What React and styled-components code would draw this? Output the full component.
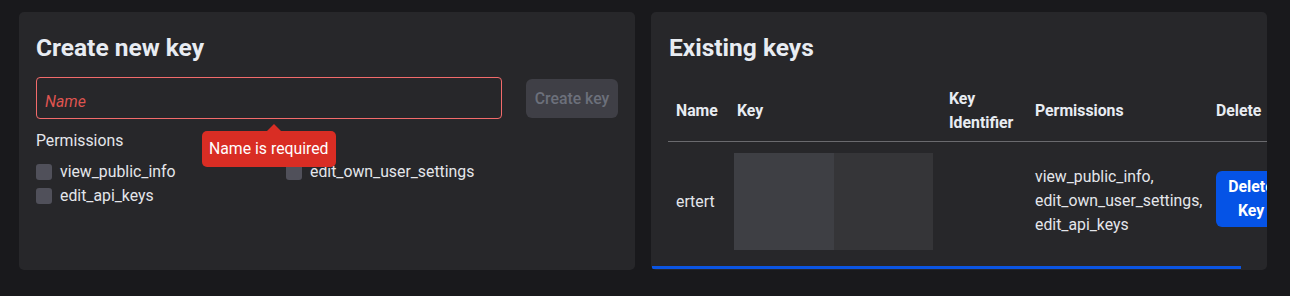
import React from "react";
import styled, { createGlobalStyle } from "styled-components";

const GlobalStyle = createGlobalStyle`
  body {
    margin: 0;
    background: #19191c;
    color: #e4e6eb;
    font-family: Roboto, "Liberation Sans", sans-serif;
    font-size: 15.8px;
  }
`;

const Page = styled.div`
  display: grid;
  grid-template-columns: 616px 616px;
  gap: 16px;
  padding: 12px 23px 0 19px;
`;

const Panel = styled.section`
  box-sizing: border-box;
  height: 258px;
  background: #27272a;
  border-radius: 5px;
  padding: ${(p) => (p.$flush ? "0" : "0 17px")};
  overflow: hidden;
`;

const Heading = styled.h2`
  margin: 0 0 15px;
  padding: 22px 0 0 ${(p) => p.$indent || 0}px;
  font-size: 24.5px;
  line-height: 28px;
  font-weight: 700;
  color: #e8ecf2;
`;

const FormRow = styled.div`
  display: flex;
  align-items: center;
  gap: 24px;
`;

const InputWrap = styled.div`
  position: relative;
  flex: 1;
`;

const NameInput = styled.input`
  box-sizing: border-box;
  width: 100%;
  height: 42px;
  padding: 6px 8px 0;
  background: transparent;
  border: 1px solid #f26b6b;
  border-radius: 4px;
  color: #e4e6eb;
  font: inherit;
  outline: none;
  &::placeholder {
    color: #df5450;
    font-style: italic;
  }
`;

const Tooltip = styled.div`
  position: absolute;
  top: calc(100% + 12px);
  left: 166px;
  padding: 6px 7px;
  background: #d92d24;
  border-radius: 5px;
  color: #fff;
  line-height: 24px;
  white-space: nowrap;
  z-index: 2;
  &::before {
    content: "";
    position: absolute;
    top: -7px;
    left: 65px;
    border-left: 7px solid transparent;
    border-right: 7px solid transparent;
    border-bottom: 7px solid #d92d24;
  }
`;

const CreateButton = styled.button`
  width: 92px;
  height: 39px;
  padding: 0;
  border: none;
  border-radius: 6px;
  background: #3f3f46;
  color: #6c707b;
  font: inherit;
  font-weight: 500;
  cursor: not-allowed;
`;

const Label = styled.div`
  margin-top: 10px;
  line-height: 24px;
  color: #e4e6eb;
`;

const PermGrid = styled.div`
  display: grid;
  grid-template-columns: 250px 1fr;
  margin-top: 7px;
`;

const PermItem = styled.label`
  display: flex;
  align-items: center;
  gap: 8px;
  line-height: 24px;
`;

const Box = styled.span`
  width: 16px;
  height: 16px;
  border-radius: 3px;
  background: #50505a;
`;

const TableScroll = styled.div`
  overflow: hidden;
  padding: 0 0 5px 17px;
`;

const Table = styled.table`
  width: 626px;
  table-layout: fixed;
  border-collapse: collapse;
`;

const Th = styled.th`
  padding: 10px 8px 6px;
  text-align: left;
  font-weight: 700;
  line-height: 24px;
  color: #e8ecf2;
  border-bottom: 1px solid #6a6a6e;
`;

const Td = styled.td`
  padding: 11px 8px;
  line-height: 24px;
  vertical-align: middle;
`;

const PermText = styled(Td)`
  padding-top: 10px;
  padding-bottom: 12px;
`;

const KeyPreview = styled.div`
  display: flex;
  margin-left: -3px;
`;

const KeyBlock = styled.div`
  width: ${(p) => p.$w}px;
  height: 97px;
  background: ${(p) => p.$bg};
`;

const DeleteButton = styled.button`
  margin-bottom: 6px;
  padding: 4px 8px;
  border: none;
  border-radius: 6px;
  background: #0553e6;
  color: #fff;
  font: inherit;
  font-weight: 700;
  line-height: 24px;
`;

const ScrollThumb = styled.div`
  width: 589px;
  height: 3px;
  margin-left: 1px;
  background: #0b55e3;
`;

const permissions = ["view_public_info", "edit_own_user_settings", "edit_api_keys"];

export default function App() {
  return (
    <>
      <GlobalStyle />
      <Page>
        <Panel>
          <Heading>Create new key</Heading>
          <FormRow>
            <InputWrap>
              <NameInput placeholder="Name" />
              <Tooltip>Name is required</Tooltip>
            </InputWrap>
            <CreateButton disabled>Create key</CreateButton>
          </FormRow>
          <Label>Permissions</Label>
          <PermGrid>
            {permissions.map((p) => (
              <PermItem key={p}>
                <Box />
                {p}
              </PermItem>
            ))}
          </PermGrid>
        </Panel>

        <Panel $flush>
          <Heading $indent={18}>Existing keys</Heading>
          <TableScroll>
            <Table>
              <colgroup>
                <col style={{ width: 61 }} />
                <col style={{ width: 212 }} />
                <col style={{ width: 86 }} />
                <col style={{ width: 181 }} />
                <col style={{ width: 86 }} />
              </colgroup>
              <thead>
                <tr>
                  <Th>Name</Th>
                  <Th>Key</Th>
                  <Th>Key Identifier</Th>
                  <Th>Permissions</Th>
                  <Th>Delete</Th>
                </tr>
              </thead>
              <tbody>
                <tr>
                  <Td>ertert</Td>
                  <Td>
                    <KeyPreview>
                      <KeyBlock $w={100} $bg="#3e3f44" />
                      <KeyBlock $w={99} $bg="#353538" />
                    </KeyPreview>
                  </Td>
                  <Td />
                  <PermText>{permissions.join(", ")}</PermText>
                  <Td>
                    <DeleteButton>Delete Key</DeleteButton>
                  </Td>
                </tr>
              </tbody>
            </Table>
          </TableScroll>
          <ScrollThumb />
        </Panel>
      </Page>
    </>
  );
}
